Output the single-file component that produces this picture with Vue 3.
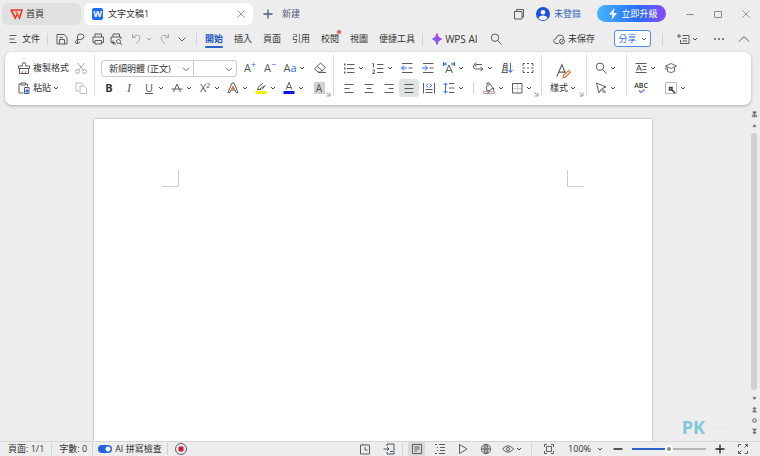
<script setup>
import { h, ref } from 'vue'

const glyphs = {
  wps: '<path d="M2.500 4h11.500l-2.500 8-2.200-4-2 4L3.300 4.500" stroke="#e8342f" stroke-width="1.600"/><path d="M7 4l4.500 7" stroke="#fa6b2e" stroke-width="1.500"/>',
  menu: '<path d="M4.500 4.500h7M4.500 8h5M4.500 11.500h7"/>',
  save: '<path d="M3 3.500h7.500l2.500 3v6.500h-10zM5.500 13v-4.500h5V13M5.500 6.500h3.500"/>',
  pdf: '<path d="M5.500 12.500V5q0-2 3-2 3.500 0 3.500 2.700T8 8.500q-4.500 0-4.500 2.500 0 1.700 1.500 1.700 2 0 3-2.200"/>',
  print: '<path d="M5 6V3h6.500v3M5 11.500H3V6h10.500v5.500h-2M5 9.500h6.500V13H5z"/>',
  preview: '<path d="M5 6V3h6.500v3M7 11.500H3V6h10v2M5 9.500V13h3"/><circle cx="10.500" cy="10.500" r="2"/><path d="M12 12l2 2"/>',
  undo: '<path d="M3.500 3v3.500H7M3.700 6.300Q6 3.500 9 4.200q2.700 1 1.700 4Q10 10.500 7 12.500" stroke="#aaa"/>',
  redo: '<path d="M12.500 3v3.500H9M12.300 6.300Q10 3.500 7 4.200q-2.700 1-1.700 4Q6 10.500 9 12.500" stroke="#aaa"/>',
  down: '<path d="M4.500 6.500L8 10l3.500-3.500"/>',
  up: '<path d="M3 10.500l5-5 5 5"/>',
  search: '<circle cx="7" cy="6.700" r="3.700"/><path d="M9.700 9.500L13.500 13.500"/>',
  spark: '<path d="M8 2.500Q8.500 7 12.500 8 8.500 9 8 13.500 7.500 9 3.500 8 7.500 7 8 2.500z" fill="#a23df5" stroke="#a23df5"/><path d="M6 8.500l2 .5v4M4.500 8.500h3" stroke="#3f8cff"/>',
  cloud: '<path d="M7.500 12.500H5Q2.500 12 2.700 9.700q.5-2 2.300-2Q5.700 4 9 4t4 3.500"/><circle cx="11" cy="10.500" r="2.500"/><path d="M9.500 11.500l3-2"/>',
  window: '<path d="M5.500 5V3.500h7V11H11M3.500 5.500H11V13H3.500z"/>',
  plus: '<path d="M8 3.500v9M3.500 8h9" stroke-width="1.300"/>',
  minus: '<path d="M3.500 8h9" stroke-width="1.500"/>',
  min: '<path d="M4.500 8.500h7" stroke="#888"/>',
  max: '<path d="M4.500 5.500h7v6h-7z" stroke="#888"/>',
  close: '<path d="M4.500 4.500l7 7M11.500 4.500l-7 7" stroke="#999"/>',
  user: '<circle cx="8" cy="8" r="7" fill="#1b4fdc" stroke="none"/><circle cx="8" cy="6.200" r="2.300" fill="#fff" stroke="none"/><path d="M3.500 12.500Q4 9.500 8 9.500t4.500 3Q8 16 3.500 12.500z" fill="#fff" stroke="none"/>',
  bolt: '<path d="M9.500 2L4 8.500h3.500L6.500 14 12 7H8.500z" fill="#fff" stroke="none"/>',
  ribbon: '<path d="M6.500 4.500h6.500v8H4.500V9M3 3v4M1 5h4M6.500 7.500H11M6.500 10H11"/>',
  dots: '<path d="M3 8h2M7 8h2M11 8h2" stroke-width="1.700"/>',
  painter: '<path d="M6.500 6V4.500Q6.500 2.500 8 2.500t1.500 2V6H13.500v2.500H2.500V6zM3.500 8.500v5h9v-5"/><path d="M6 13l1-2M9 13l1-2" stroke="#e0703a"/>',
  paste: '<path d="M7.500 13H3V4h2M9.500 4h2v2.500M5 3h4.500v2H5z"/><path d="M8.500 7.500h4.500v6h-4.500z" stroke="#4b5b86"/><path d="M10 10h2v2h-2z" fill="#2f6bff" stroke="#2f6bff"/>',
  cut: '<g stroke="#aaa"><circle cx="4.500" cy="11.500" r="2"/><circle cx="11.500" cy="11.500" r="2"/><path d="M5.500 10L11.500 3M10.500 10L4.500 3"/></g>',
  copy: '<g stroke="#bbb"><path d="M6 11H3V3h5.500l1.500 2"/><path d="M7 6h4l2.500 2.500V13.500H7z"/></g>',
  strike: '<path d="M4.500 12L8 4l3.500 8M2.500 9h11"/>',
  outlineA: '<path d="M3 12.500L7 3h2l4 9.500h-2l-1-2.500H6l-1 2.500z"/><path d="M8 6l-1.500 3h3z" fill="#e8703a" stroke="#e8703a"/>',
  marker: '<path d="M2.500 12.500h11" stroke="#f4ee00" stroke-width="3"/><path d="M4 9.500h4M5 7.500L10 3M7 9l4-3M9 9.500L12.500 5M5 7.500v2"/>',
  fontcolor: '<path d="M2.500 12.500h11" stroke="#0d12e0" stroke-width="3"/><path d="M5 9.500L8 2.500l3 7M6 7.500h4"/>',
  eraser: '<path d="M2.500 9L8.500 3 13.500 7.500 8.500 12H6zM5.500 6.500l5 4.500M6 12.500h8"/>',
  bullets: '<path d="M6 4.500h7.500M6 8.500h7.500M6 12.500h7.500"/><path d="M3 4.500h1.500M3 8.500h1.500M3 12.500h1.500" stroke-width="2"/>',
  numbers: '<path d="M7 4.500h6.500M7 8.500h6.500M7 12.500h6.500M2.500 3.500h1v4M2.500 10h2v1l-2 2.500h2.500"/>',
  outdent: '<path d="M3 3.500h10.500M9.500 8h4M3 12.500h10.500"/><path d="M8 8H2.500M5 5.500L2.500 8 5 10.500" stroke="#2f6bff"/>',
  indent: '<path d="M3 3.500h10.500M9.500 8h4M3 12.500h10.500"/><path d="M2 8h5.500M5 5.500L7.500 8 5 10.500" stroke="#2f6bff"/>',
  spacing: '<path d="M4.500 13L8 5l3.500 8M6 10.500h4"/><path d="M2.500 2v4M13.500 2v4M3 4h3M10 4h3M5 2.500L3.500 4 5 5.500M11 2.500L12.500 4 11 5.500" stroke="#2f6bff"/>',
  direction: '<path d="M12 4.500H5.500M6.500 2.500l-2.500 2 2.500 2M3.500 5.500v1.500q0 2 2 2H12.500M10.500 7l2.500 2-2.500 2"/>',
  sort: '<path d="M3.500 12.500L5 3.500h3v9M5 5.500h3M4.500 7.500H8M3.500 10H8M2.500 12.500h6"/><path d="M11.500 3v9M9.500 10l2 2.500 2-2.500" stroke="#2f6bff"/>',
  marks: '<path d="M3 6V3.500h2M7 3.500h2M11 3.500h2V6M3 10v2.500h2M7 12.500h2M11 12.500h2V10M2.500 8h2.500M7 8h2M11 8h2.500"/>',
  left: '<path d="M3.500 4.500h9M3.500 8.500h5M3.500 12.500h9"/>',
  center: '<path d="M3.500 4.500h9M5.500 8.500h5M3.500 12.500h9"/>',
  right: '<path d="M3.500 4.500h9M7.500 8.500h5M3.500 12.500h9"/>',
  justify: '<path d="M3.500 4.500h9M3.500 8.500h9M3.500 12.500h9"/>',
  distribute: '<path d="M2.500 3v10.500M13.500 3v10.500M4.500 9.500h7M4.500 12.500h7"/><path d="M7 3.500L5.500 5.500 7 7.500M9 3.500l1.500 2L9 7.500" stroke="#2f6bff"/>',
  lines: '<path d="M8 3.500h5.500M8 8h5.500M8 12.500h5.500"/><path d="M4.500 3v10.500M2.500 5l2-2 2 2M2.500 11l2 2 2-2" stroke="#2f6bff"/>',
  fill: '<path d="M5 7l4-3 3 4-3.500 2.500H6zM6 5V3h3M12.500 8v2.500"/><path d="M2.500 11.500h11v2h-11z" stroke="#aaa"/><path d="M6 13.500l3-2" stroke="#e34c3c"/>',
  border: '<path d="M8.500 4v9M4 8.500h9" stroke="#ccc"/><path d="M3.500 3.500h9.500v9.500H3.500z"/>',
  styles: '<path d="M2.500 13L7 2.500 11 12M4.500 9h5"/><path d="M8 14l.5-2L13 7.500l1.500 1.500L10 13.500z" stroke="#dd6b35" fill="#fff"/>',
  select: '<path d="M3.500 3l9.500 4-4 1.500 3.500 3.500-1 1L8 9.500 6 13z"/>',
  para: '<path d="M2.500 3.500h11M2.500 12.500h11M3.500 11L6 5l2.500 6M4.500 9h3M9.500 6.500h4M9.500 9.500h4"/>',
  spell: '<path d="M6 10.500l2 2 3.500-3" stroke="#8755e8" stroke-width="1.200"/>',
  hat: '<path d="M2.500 6L8 3.500 13.500 6 8 8.500zM4.500 7.500v4q3.500 2 7 0v-4M3 6.500V10" stroke="#68707c"/>',
  wrench: '<path d="M2.500 2.500h11v11h-11z" stroke="#bbb"/><path d="M6.500 7.500h2.500v2.500h-2.500zM9 10l3 3" stroke-width="1.500" stroke="#354052"/>',
  launcher: '<path d="M5 5l6 6M12 5v7H5" stroke="#999" stroke-width="2"/>',
  clock: '<path d="M3.500 4h9v9h-9zM8 6v3h2.500M6 2.500v1.500"/>',
  devices: '<path d="M6 5V3h7v10H6v-2M2.500 8H8M6 6l2 2-2 2M9 10.500h3" stroke="#4b5567"/>',
  doc: '<path d="M3.500 3.500h9v9h-9zM5.500 6h5M5.500 8h5M5.500 10h2.500"/>',
  outline: '<path d="M3 3.500h2M7 3.500h6M5 6.500h1M8 6.500h5M5 9.500h1M8 9.500h5M3 12.500h2M7 12.500h6"/>',
  play: '<path d="M4.500 3.500L12 8l-7.500 4.500z"/>',
  globe: '<circle cx="8" cy="8" r="4.700"/><ellipse cx="8" cy="8" rx="2" ry="4.700"/><path d="M3.500 8h9M8 3.500v9"/>',
  eye: '<path d="M2.500 8Q8 1.500 13.500 8 8 14.500 2.500 8z"/><circle cx="8" cy="8" r="1.600"/>',
  fit: '<path d="M3.500 6V3.500H6M10 3.500h2.500V6M12.500 10v2.500H10M6 12.500H3.500V10M5.500 5.500h5v5h-5z"/>',
  full: '<path d="M3.500 6V3.500H6M10 3.500h2.500V6M12.500 10v2.500H10M6 12.500H3.500V10M9.500 6.500l2.500-2.500M6.500 9.500L4 12"/>',
  record: '<circle cx="8" cy="8" r="5.500"/><path d="M6 6h4v4H6z" fill="#d3173d" stroke="#d3173d"/>',
  ruler: '<path d="M4 2h8l-4 5zM2 9.500h12M2 13h12M8 7v6" fill="#666" stroke="#666" stroke-width="2"/>',
  triUp: '<path d="M4 11l4-6 4 6z" fill="#777" stroke="#777"/>',
  triDown: '<path d="M4 5l4 6 4-6z" fill="#777" stroke="#777"/>',
  pageUp: '<path d="M4 7l4-5 4 5zM4 13l4-5 4 5zM3 14h10" fill="#666" stroke="#666"/>',
  ring: '<circle cx="8" cy="8" r="4" stroke="#777" stroke-width="2.500"/>',
  pageDown: '<path d="M4 9l4 5 4-5zM4 3l4 5 4-5zM3 2h10" fill="#666" stroke="#666"/>',
}

const Icon = (props) =>
  h('svg', { class: 'icon', viewBox: '0 0 16 16', 'aria-hidden': 'true', innerHTML: glyphs[props.name] })
Icon.props = ['name']

const Caret = () =>
  h('svg', { class: 'caret', viewBox: '0 0 6 6', 'aria-hidden': 'true' }, [h('path', { d: 'M1 2l2 2 2-2' })])

const tabs = ['開始', '插入', '頁面', '引用', '校閱', '視圖', '便捷工具']
const activeTab = ref('開始')
const spellCheck = ref(true)
const zoom = ref(50)
const font = ref('新細明體 (正文)')
const size = ref('')

const quick = [
  { icon: 'save', label: '儲存' },
  { icon: 'pdf', label: '輸出為 PDF' },
  { icon: 'print', label: '列印' },
  { icon: 'preview', label: '預覽列印' },
]
const paraTop = [
  { icon: 'bullets', label: '項目符號', drop: true },
  { icon: 'numbers', label: '編號', drop: true },
  { icon: 'outdent', label: '減少縮排' },
  { icon: 'indent', label: '增加縮排' },
  { icon: 'spacing', label: '字元縮放', drop: true },
  { icon: 'direction', label: '文字方向', drop: true },
  { icon: 'sort', label: '排序' },
  { icon: 'marks', label: '顯示標記' },
]
const aligns = [
  { icon: 'left', label: '靠左對齊' },
  { icon: 'center', label: '置中' },
  { icon: 'right', label: '靠右對齊' },
  { icon: 'justify', label: '左右對齊' },
  { icon: 'distribute', label: '分散對齊' },
]
const align = ref('justify')
const views = [
  { icon: 'doc', label: '頁面檢視' },
  { icon: 'outline', label: '大綱檢視' },
  { icon: 'play', label: '播放' },
  { icon: 'globe', label: 'Web 檢視' },
]
const view = ref('doc')
</script>

<template>
  <div class="app">
    <header class="titlebar">
      <button class="doc-tab home"><Icon name="wps" />首頁</button>
      <div class="doc-tab current">
        <span class="w-logo">W</span>
        <span class="doc-name">文字文稿1</span>
        <button class="plain" aria-label="關閉文件"><Icon name="close" /></button>
      </div>
      <button class="plain new-doc"><Icon name="plus" />新建</button>
      <div class="title-right">
        <button class="plain" aria-label="視窗"><Icon name="window" /></button>
        <button class="plain account"><Icon name="user" />未登錄</button>
        <button class="upgrade"><Icon name="bolt" />立即升級</button>
        <div class="window-controls">
          <button class="plain" aria-label="最小化"><Icon name="min" /></button>
          <button class="plain" aria-label="最大化"><Icon name="max" /></button>
          <button class="plain" aria-label="關閉"><Icon name="close" /></button>
        </div>
      </div>
    </header>

    <nav class="menubar">
      <button class="plain file"><Icon name="menu" />文件</button>
      <i class="bar"></i>
      <div class="quick">
        <button v-for="q in quick" :key="q.icon" class="plain" :aria-label="q.label"><Icon :name="q.icon" /></button>
        <button class="plain muted" aria-label="復原"><Icon name="undo" /><Caret /></button>
        <button class="plain" aria-label="重做"><Icon name="redo" /></button>
        <button class="plain" aria-label="更多"><Icon name="down" /></button>
      </div>
      <i class="bar"></i>
      <div class="tabs">
        <button
          v-for="t in tabs"
          :key="t"
          class="plain tab"
          :class="{ active: t === activeTab, notice: t === '校閱' }"
          @click="activeTab = t"
        >{{ t }}</button>
      </div>
      <i class="bar"></i>
      <button class="plain ai"><Icon name="spark" />WPS AI</button>
      <button class="plain find" aria-label="搜尋"><Icon name="search" /></button>
      <div class="menu-right">
        <button class="plain unsaved"><Icon name="cloud" />未保存</button>
        <button class="share">分享<Caret /></button>
        <i class="bar"></i>
        <button class="plain" aria-label="功能區"><Icon name="ribbon" /><Caret /></button>
        <button class="plain" aria-label="更多選項"><Icon name="dots" /></button>
        <button class="plain" aria-label="收合"><Icon name="up" /></button>
      </div>
    </nav>

    <section class="ribbon">
      <div class="group clipboard">
        <div class="row">
          <button class="plain wide"><Icon name="painter" />複製格式</button>
          <button class="tool end" aria-label="剪下"><Icon name="cut" /></button>
        </div>
        <div class="row">
          <button class="plain wide"><Icon name="paste" />粘貼<Caret /></button>
          <button class="tool end" aria-label="複製"><Icon name="copy" /></button>
        </div>
      </div>
      <i class="divider"></i>

      <div class="group">
        <div class="row">
          <div class="fonts">
            <label class="pick family">
              <select v-model="font" aria-label="字型"><option>新細明體 (正文)</option></select>
              <Icon name="down" />
            </label>
            <label class="pick">
              <select v-model="size" aria-label="字型大小"><option value=""></option><option>12</option></select>
              <Icon name="down" />
            </label>
          </div>
          <button class="tool" aria-label="放大字型"><span class="letter">A<sup>+</sup></span></button>
          <button class="tool" aria-label="縮小字型"><span class="letter">A<sup>−</sup></span></button>
          <button class="tool drop" aria-label="大小寫"><span class="letter">A<b>a</b></span><Caret /></button>
          <button class="tool end" aria-label="清除格式"><Icon name="eraser" /></button>
        </div>
        <div class="row">
          <button class="tool" aria-label="粗體"><span class="letter bold">B</span></button>
          <button class="tool" aria-label="斜體"><span class="letter italic">I</span></button>
          <button class="tool drop" aria-label="底線"><span class="letter under">U</span><Caret /></button>
          <button class="tool drop" aria-label="刪除線"><Icon name="strike" /><Caret /></button>
          <button class="tool drop" aria-label="上標"><span class="letter">X²</span><Caret /></button>
          <button class="tool drop" aria-label="文字效果"><Icon name="outlineA" /><Caret /></button>
          <button class="tool drop" aria-label="醒目提示"><Icon name="marker" /><Caret /></button>
          <button class="tool drop" aria-label="字型色彩"><Icon name="fontcolor" /><Caret /></button>
          <button class="tool end" aria-label="字元網底"><span class="letter shaded">A</span></button>
        </div>
        <button class="launcher" aria-label="字型設定"><Icon name="launcher" /></button>
      </div>
      <i class="divider"></i>

      <div class="group paragraph">
        <div class="row spaced">
          <button v-for="p in paraTop" :key="p.icon" class="tool" :class="{ drop: p.drop }" :aria-label="p.label">
            <Icon :name="p.icon" /><Caret v-if="p.drop" />
          </button>
        </div>
        <div class="row">
          <button
            v-for="a in aligns"
            :key="a.icon"
            class="tool"
            :class="{ selected: a.icon === align }"
            :aria-label="a.label"
            @click="align = a.icon"
          ><Icon :name="a.icon" /></button>
          <button class="tool drop" aria-label="行距"><Icon name="lines" /><Caret /></button>
          <i class="bar"></i>
          <button class="tool drop" aria-label="網底"><Icon name="fill" /><Caret /></button>
          <button class="tool drop" aria-label="框線"><Icon name="border" /><Caret /></button>
        </div>
        <button class="launcher" aria-label="段落設定"><Icon name="launcher" /></button>
      </div>
      <i class="divider"></i>

      <div class="group styles">
        <button class="plain big"><Icon name="styles" /><span>樣式<Caret /></span></button>
        <button class="launcher" aria-label="樣式設定"><Icon name="launcher" /></button>
      </div>
      <i class="divider"></i>

      <div class="group editing">
        <button class="tool drop" aria-label="尋找"><Icon name="search" /><Caret /></button>
        <button class="tool drop" aria-label="選取"><Icon name="select" /><Caret /></button>
      </div>
      <i class="divider"></i>

      <div class="group extras">
        <button class="tool drop" aria-label="排版"><Icon name="para" /><Caret /></button>
        <button class="tool" aria-label="學習"><Icon name="hat" /></button>
        <button class="tool spell" aria-label="拼寫檢查"><span>ABC</span><Icon name="spell" /></button>
        <button class="tool drop" aria-label="工具"><Icon name="wrench" /><Caret /></button>
      </div>
    </section>

    <main class="workspace">
      <div class="desk">
        <article class="page">
          <i class="corner start"></i>
          <i class="corner finish"></i>
        </article>
        <div class="watermark">PK<i></i></div>
      </div>
      <aside class="scroller">
        <button class="plain" aria-label="尺規"><Icon name="ruler" /></button>
        <button class="plain" aria-label="向上"><Icon name="triUp" /></button>
        <div class="thumb"></div>
        <button class="plain" aria-label="向下"><Icon name="triDown" /></button>
        <button class="plain" aria-label="上一頁"><Icon name="pageUp" /></button>
        <button class="plain" aria-label="瀏覽物件"><Icon name="ring" /></button>
        <button class="plain" aria-label="下一頁"><Icon name="pageDown" /></button>
      </aside>
    </main>

    <footer class="status">
      <span>頁面: 1/1</span>
      <i class="bar"></i>
      <span>字數: 0</span>
      <i class="bar tight"></i>
      <label class="switch"><input v-model="spellCheck" type="checkbox" />AI 拼寫檢查</label>
      <i class="bar tight"></i>
      <button class="plain" aria-label="錄製"><Icon name="record" /></button>
      <div class="status-right">
        <button class="plain history" aria-label="歷史"><Icon name="clock" /></button>
        <button class="plain" aria-label="裝置"><Icon name="devices" /></button>
        <i class="bar"></i>
        <div class="views">
          <button
            v-for="v in views"
            :key="v.icon"
            class="plain view"
            :class="{ selected: v.icon === view }"
            :aria-label="v.label"
            @click="view = v.icon"
          ><Icon :name="v.icon" /></button>
          <button class="plain" aria-label="護眼模式"><Icon name="eye" /><Caret /></button>
        </div>
        <i class="bar roomy"></i>
        <button class="plain" aria-label="最適大小"><Icon name="fit" /></button>
        <button class="plain percent">100%<Caret /></button>
        <button class="plain strong" aria-label="縮小"><Icon name="minus" /></button>
        <input v-model="zoom" class="zoom" type="range" min="0" max="100" aria-label="顯示比例" />
        <button class="plain strong" aria-label="放大"><Icon name="plus" /></button>
        <button class="plain full" aria-label="全螢幕"><Icon name="full" /></button>
      </div>
    </footer>
  </div>
</template>

<style>
body {
  background: #ededed;
}
</style>

<style scoped>
.app {
  display: flex;
  flex-direction: column;
  min-height: 100vh;
  background: #ededed;
  color: #333;
  font: 9px/12px "Open Sans", "Noto Sans CJK TC", sans-serif;
  white-space: nowrap;
}
.app * {
  box-sizing: border-box;
}
button,
select {
  font: inherit;
  color: inherit;
  border: 0;
  margin: 0;
  padding: 0;
  background: none;
}
:deep(.icon) {
  flex: none;
  width: 16px;
  height: 16px;
  fill: none;
  stroke: #5c5c5c;
  stroke-width: 1;
}
:deep(.caret) {
  flex: none;
  width: 6px;
  height: 6px;
  fill: none;
  stroke: #444;
  stroke-width: 1;
}
.plain {
  display: flex;
  align-items: center;
}
.bar {
  flex: none;
  width: 1px;
  height: 12px;
  background: #d2d2d2;
}

.titlebar {
  display: flex;
  align-items: center;
  height: 27px;
  padding: 0 6px 0 2px;
}
.doc-tab {
  display: flex;
  align-items: center;
  height: 22px;
  border-radius: 6px;
}
.home {
  width: 79px;
  padding-left: 6px;
  gap: 2px;
  background: #e0e0e0;
}
.current {
  width: 169px;
  margin-left: 3px;
  padding: 0 4px 0 8px;
  gap: 5px;
  background: #fff;
}
.current .plain {
  margin-left: auto;
}
.w-logo {
  width: 11px;
  height: 12px;
  border-radius: 2px;
  background: #1f6bf5;
  color: #fff;
  font-weight: 700;
  text-align: center;
}
.new-doc {
  margin-left: 7px;
  gap: 6px;
  color: #4b5878;
}
.new-doc :deep(.icon) {
  stroke: #4b5878;
}
.title-right {
  display: flex;
  align-items: center;
  margin-left: auto;
}
.account {
  margin-left: 8px;
  gap: 3px;
  color: #2c62b8;
}
.upgrade {
  display: flex;
  align-items: center;
  justify-content: center;
  width: 69px;
  height: 17px;
  margin-left: 16px;
  border-radius: 9px;
  background: linear-gradient(90deg, #43b6ff, #2a6cfa 60%, #8a4bf6);
  color: #fff;
}
.window-controls {
  display: flex;
  gap: 12px;
  margin-left: 16px;
}

.menubar {
  display: flex;
  align-items: center;
  height: 23px;
  padding: 0 8px 0 5px;
}
.file {
  gap: 1px;
  margin-right: 7px;
}
.quick {
  display: flex;
  align-items: center;
  gap: 2px;
  margin: 0 6px;
}
.quick .muted {
  width: 25px;
  margin-left: 3px;
}
.muted :deep(.caret) {
  margin-left: 1px;
  stroke: #999;
}
.tabs {
  display: flex;
  gap: 11px;
  margin: 0 7px 0 8px;
}
.tab {
  position: relative;
  height: 22px;
}
.active {
  color: #2159c4;
  font-weight: 700;
}
.active::after {
  content: "";
  position: absolute;
  right: 0;
  bottom: 2px;
  left: 0;
  height: 2px;
  border-radius: 1px;
  background: #2b63cf;
}
.notice::after {
  content: "";
  position: absolute;
  top: 2px;
  right: -2px;
  width: 4px;
  height: 4px;
  border-radius: 50%;
  background: #f0544c;
}
.ai {
  margin-left: 6px;
  font-size: 10px;
}
.find {
  margin-left: 10px;
}
.menu-right {
  display: flex;
  align-items: center;
  margin-left: auto;
}
.unsaved {
  gap: 1px;
  margin-right: 19px;
}
.share {
  display: flex;
  align-items: center;
  justify-content: center;
  gap: 4px;
  width: 37px;
  height: 17px;
  margin-right: 11px;
  border: 1px solid #4a8bf5;
  border-radius: 3px;
  background: #fff;
  color: #2f74ee;
}
.share :deep(.caret) {
  stroke: #2f74ee;
}
.share ~ .plain {
  margin-left: 13px;
}
.share ~ .plain:last-child {
  margin-left: 9px;
}

.ribbon {
  display: flex;
  margin: 2px 9px 0 5px;
  padding: 6px 0 7px 11px;
  border-radius: 7px;
  background: #fff;
  box-shadow: 0 1px 3px #aaa;
}
.group {
  position: relative;
  flex: none;
}
.row {
  display: flex;
  align-items: center;
  height: 20px;
}
.spaced {
  gap: 1px;
}
.divider {
  flex: none;
  width: 1px;
  height: 41px;
  margin: -3px 4px 0 3px;
  background: #dcdcdc;
}
.clipboard {
  width: 75px;
}
.wide {
  gap: 1px;
}
.wide :deep(.caret) {
  margin-left: 1px;
}
.tool {
  display: flex;
  flex: none;
  align-items: center;
  justify-content: center;
  width: 20px;
  height: 18px;
  border-radius: 3px;
}
.drop {
  justify-content: flex-start;
  gap: 1px;
  width: 28px;
  padding-left: 2px;
}
.end {
  margin-left: auto;
}
.drop + .end {
  margin-left: 2px;
}
.selected {
  background: #dfe3e1;
}
.letter {
  width: 16px;
  font-size: 11px;
  line-height: 14px;
  text-align: center;
  color: #555;
}
.letter sup {
  font-size: 9px;
  line-height: 1px;
  vertical-align: 4px;
  color: #2f6bff;
}
.letter b {
  font-weight: 400;
  color: #2f6bff;
}
.bold {
  font-weight: 700;
  color: #333;
}
.italic {
  font-family: "Liberation Serif", serif;
  font-size: 12px;
  font-style: italic;
}
.under {
  text-decoration: underline;
}
.shaded {
  width: 11px;
  height: 12px;
  background: #d0d0d0;
  font-size: 10px;
  line-height: 12px;
}
.fonts {
  display: flex;
  width: 136px;
  height: 17px;
  margin: 0 3px 0 2px;
  border: 1px solid #ccc;
  border-radius: 3px;
}
.pick {
  display: grid;
  flex: 1;
  align-items: center;
}
.pick > * {
  grid-area: 1 / 1;
}
.pick select {
  width: 100%;
  height: 15px;
  padding-left: 7px;
  appearance: none;
}
.pick :deep(.icon) {
  justify-self: end;
  width: 14px;
  pointer-events: none;
}
.family {
  flex: 0 0 92px;
  border-right: 1px solid #ccc;
}
.launcher {
  position: absolute;
  right: -2px;
  bottom: 0;
  width: 8px;
  height: 8px;
}
.launcher :deep(.icon) {
  display: block;
  width: 8px;
  height: 8px;
}
.paragraph {
  padding-left: 1px;
}
.paragraph .bar {
  margin: 0 5px 0 6px;
}
.styles {
  width: 37px;
}
.big {
  flex-direction: column;
  gap: 2px;
  padding: 4px 0 0 4px;
}
.big span {
  display: flex;
  align-items: center;
  gap: 2px;
}
.big :deep(.icon) {
  width: 18px;
  height: 18px;
}
.editing {
  width: 32px;
}
.editing,
.extras {
  display: grid;
  grid-template-rows: 20px 20px;
  align-items: center;
}
.extras {
  grid-template-columns: 30px 28px;
}
.spell {
  display: grid;
  align-items: center;
  justify-items: center;
  font-size: 7px;
  line-height: 8px;
  font-weight: 600;
}
.spell > * {
  grid-area: 1 / 1;
}
.spell span {
  padding-bottom: 4px;
}

.workspace {
  display: flex;
  flex: 1;
}
.desk {
  position: relative;
  display: flex;
  flex: 1;
  padding: 14px 94px 0;
}
.page {
  display: flex;
  flex: 1;
  align-items: flex-start;
  justify-content: space-between;
  padding: 51px 68px 0;
  background: #fff;
  box-shadow: 0 0 2px #999;
}
.corner {
  width: 17px;
  height: 17px;
  border: 0 solid #ccc;
  border-bottom-width: 1px;
}
.start {
  border-right-width: 1px;
}
.finish {
  border-left-width: 1px;
}
.watermark {
  position: absolute;
  right: 18px;
  bottom: 4px;
  display: flex;
  align-items: center;
  gap: 3px;
  color: #7fc8da;
  font-size: 18px;
  line-height: 20px;
  font-weight: 700;
}
.watermark i {
  width: 20px;
  border-top: 1px dotted #d5e6ea;
}
.scroller {
  display: flex;
  flex-direction: column;
  align-items: center;
  width: 14px;
  padding: 4px 0 4px 2px;
}
.scroller :deep(.icon) {
  width: 7px;
  height: 11px;
}
.thumb {
  flex: 1;
  width: 6px;
  margin: 2px 0 3px;
  border-radius: 3px;
  background: #d0d0d0;
}

.status {
  display: flex;
  align-items: center;
  height: 15px;
  padding: 0 9px 0 8px;
  background: #ededed;
  box-shadow: inset 0 1px 0 #d5d5d5;
  z-index: 1;
}
.status > .bar {
  margin: 0 7px;
}
.status > .tight {
  margin: 0 5px;
}
.switch {
  display: flex;
  align-items: center;
  gap: 3px;
}
.switch input {
  appearance: none;
  width: 14px;
  height: 8px;
  margin: 0;
  border-radius: 4px;
  background: radial-gradient(circle at 10px 4px, #fff 2px, #1f63dd 3px);
}
.status-right {
  display: flex;
  align-items: center;
  margin-left: auto;
}
.history {
  margin-right: 8px;
}
.status-right > .bar {
  margin: 0 5px;
}
.status-right > .roomy {
  margin: 0 9px;
}
.views {
  display: flex;
  align-items: center;
  gap: 6px;
}
.view {
  justify-content: center;
  width: 17px;
  height: 15px;
}
.views .selected {
  background: #d8d8d8;
  border-radius: 2px;
}
.percent {
  gap: 6px;
  margin: 0 7px 0 11px;
}
.strong :deep(.icon) {
  stroke: #222;
  stroke-width: 2;
}
.zoom {
  appearance: none;
  width: 74px;
  height: 10px;
  margin: 0 6px;
  background: linear-gradient(90deg, #2b63c8 50%, #b5b5b5 50%) center / 100% 2px no-repeat;
}
.zoom::-webkit-slider-thumb {
  appearance: none;
  width: 8px;
  height: 8px;
  border: 2px solid #fff;
  border-radius: 50%;
  background: #888;
}
.full {
  margin-left: 7px;
}
</style>
